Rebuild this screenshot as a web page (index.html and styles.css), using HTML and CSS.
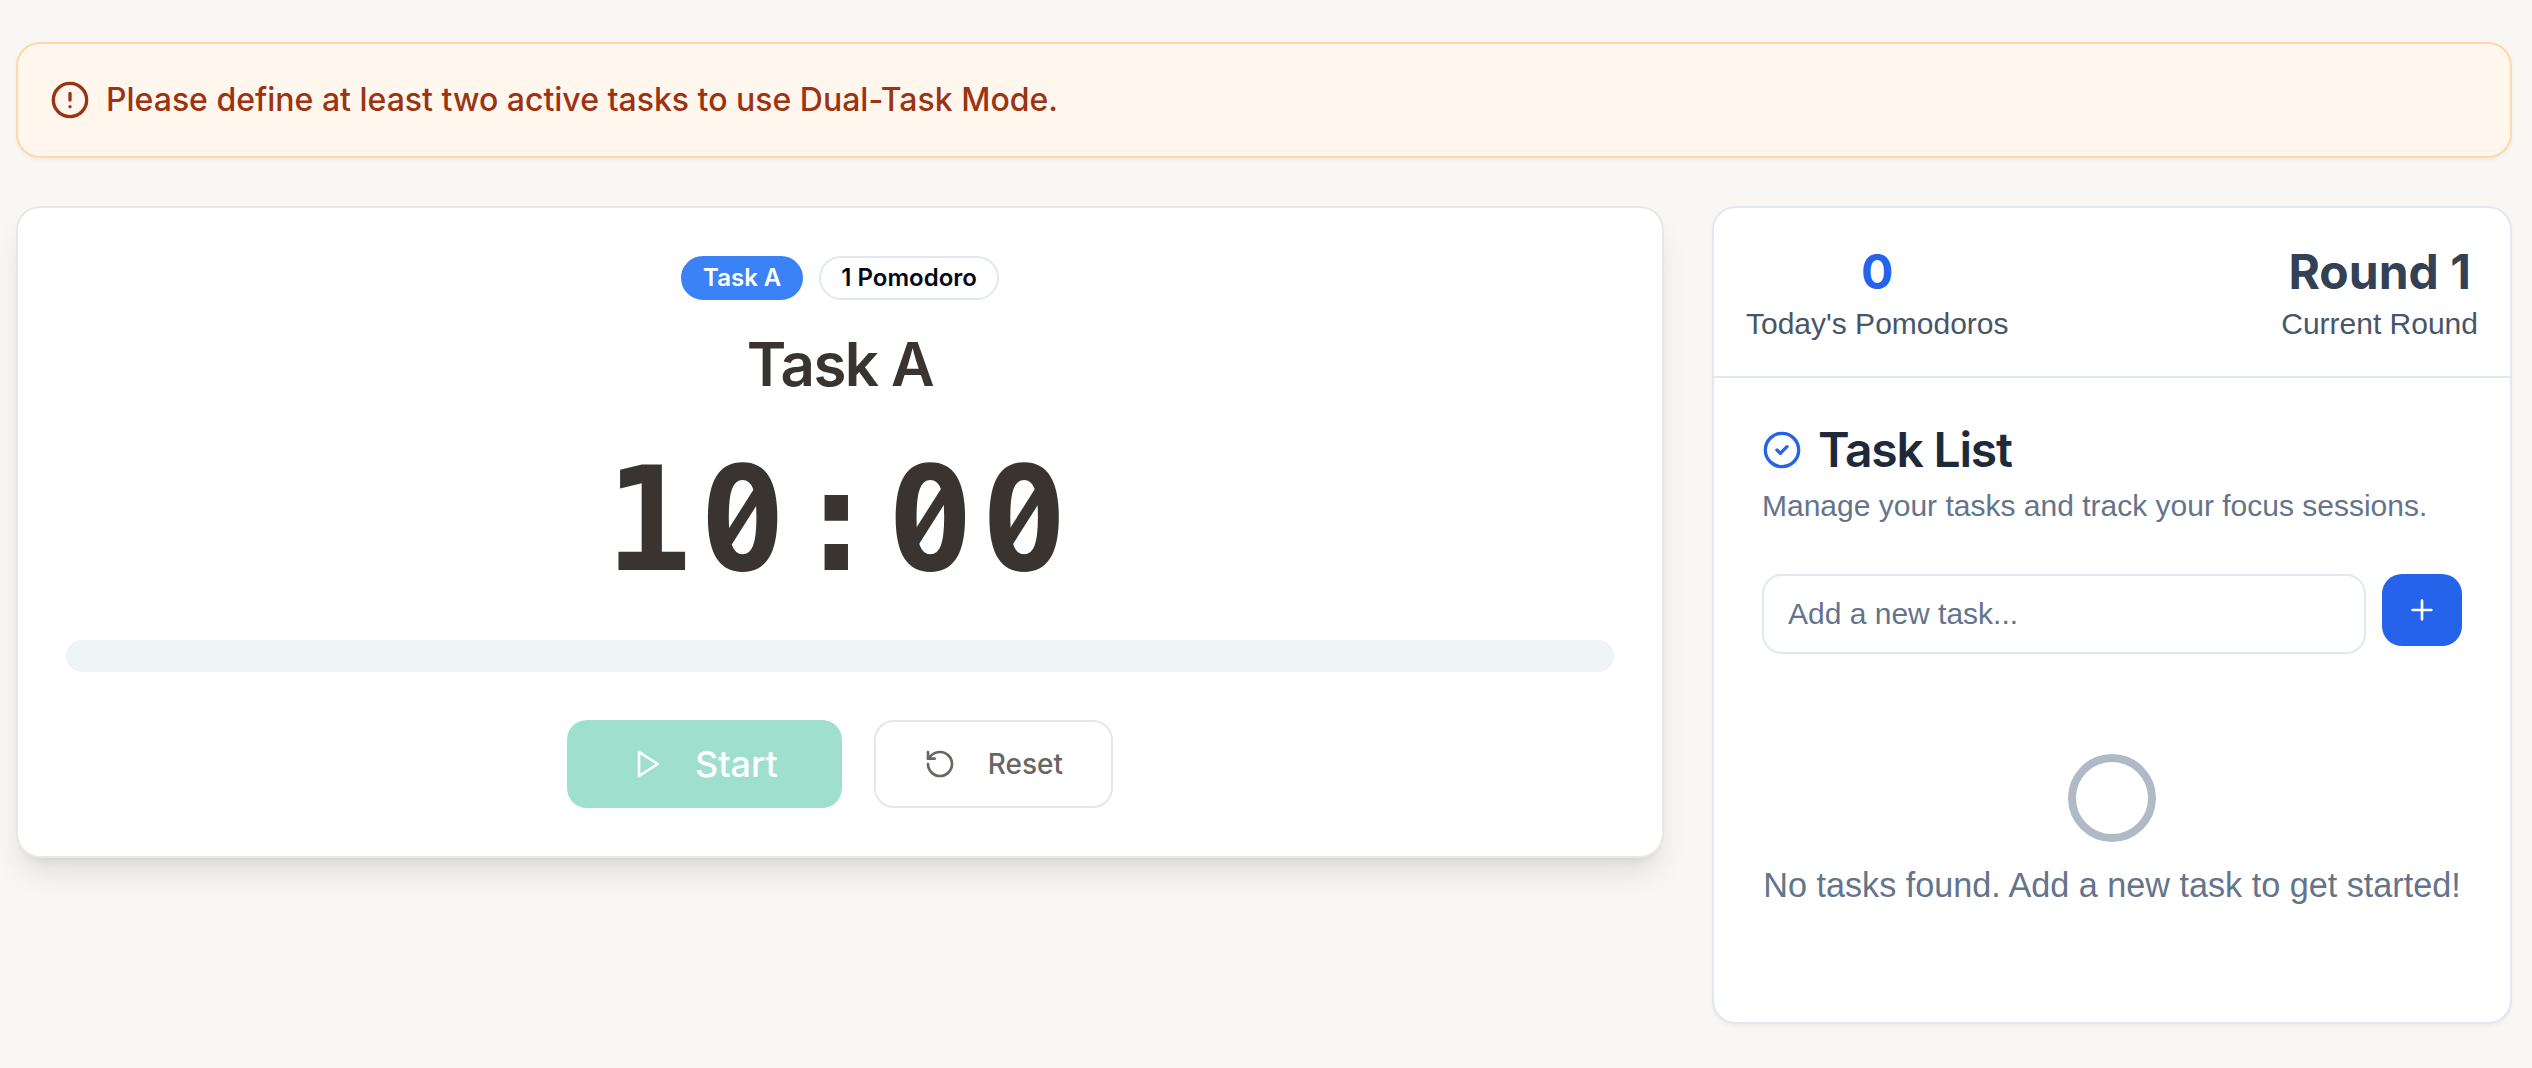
FILE: index.html
```html
<!DOCTYPE html>
<html lang="en">
<head>
<meta charset="utf-8">
<title>Dual-Task Pomodoro</title>
<link rel="stylesheet" href="styles.css">
</head>
<body>
<main class="page">
  <div class="alert" role="alert">
    <svg class="icon icon-lg" viewBox="0 0 24 24"><circle cx="12" cy="12" r="10"/><path d="M12 8v4M12 16h.01"/></svg>
    <span class="alert-text">Please define at least two active tasks to use Dual-Task Mode.</span>
  </div>
  <div class="columns">
    <section class="card timer-card">
      <div class="badges">
        <span class="badge badge-active">Task A</span>
        <span class="badge">1 Pomodoro</span>
      </div>
      <h1 class="task-name">Task A</h1>
      <div class="clock"><span>1</span><span class="zero">0</span><span>:</span><span class="zero">0</span><span class="zero">0</span></div>
      <div class="progress"></div>
      <div class="actions">
        <button class="btn btn-start" disabled>
          <svg class="icon" viewBox="0 0 24 24"><path d="M6 3l14 9-14 9z"/></svg>Start
        </button>
        <button class="btn btn-reset">
          <svg class="icon" viewBox="0 0 24 24"><path d="M3 12a9 9 0 1 0 9-9 9.75 9.75 0 0 0-6.74 2.74L3 8"/><path d="M3 3v5h5"/></svg>Reset
        </button>
      </div>
    </section>
    <aside class="card side-card">
      <div class="stats">
        <div class="stat">
          <span class="stat-value stat-blue">0</span>
          <span class="stat-label">Today's Pomodoros</span>
        </div>
        <div class="stat">
          <span class="stat-value">Round 1</span>
          <span class="stat-label">Current Round</span>
        </div>
      </div>
      <div class="tasks">
        <h2 class="tasks-title">
          <svg class="icon icon-lg icon-blue" viewBox="0 0 24 24"><circle cx="12" cy="12" r="10"/><path d="m9 12 2 2 4-4"/></svg>
          <span>Task List</span>
        </h2>
        <p class="tasks-desc">Manage your tasks and track your focus sessions.</p>
        <form class="add-row">
          <input class="add-input" type="text" placeholder="Add a new task...">
          <button class="add-btn" type="button" aria-label="Add task">
            <svg class="icon" viewBox="0 0 24 24"><path d="M5 12h14M12 5v14"/></svg>
          </button>
        </form>
        <div class="empty">
          <div class="empty-ring"></div>
          <p class="empty-text">No tasks found. Add a new task to get started!</p>
        </div>
      </div>
    </aside>
  </div>
</main>
</body>
</html>
```
FILE: styles.css
```css
* { box-sizing: border-box; margin: 0; padding: 0; }

body {
  min-height: 100vh;
  background: #f8f7f3;
  font-family: "Liberation Sans", Arial, sans-serif;
}

.page {
  display: flex;
  flex-direction: column;
  gap: 48px;
  padding: 42px 20px 0 16px;
}

.icon {
  width: 32px;
  height: 32px;
  flex: none;
  fill: none;
  stroke: currentColor;
  stroke-width: 2;
  stroke-linecap: round;
  stroke-linejoin: round;
}
.icon-lg { width: 40px; height: 40px; }
.icon-blue { color: #2563eb; }

.alert {
  display: flex;
  align-items: center;
  gap: 16px;
  height: 116px;
  padding: 0 32px;
  border: 2px solid #fed7aa;
  border-radius: 24px;
  background: #fff6ed;
  color: #9a3412;
  box-shadow: 0 2px 4px rgba(0, 0, 0, 0.05);
}
.alert-text { font: 500 32px/48px Inter, sans-serif; }

.columns {
  display: grid;
  grid-template-columns: 1648px 800px;
  gap: 48px;
  align-items: start;
}

.card { border-radius: 24px; background: #fff; }

.timer-card {
  display: flex;
  flex-direction: column;
  align-items: center;
  height: 652px;
  padding: 48px;
  border: 2px solid #e8e8e3;
  box-shadow: 0 20px 30px -6px rgba(0, 0, 0, 0.1), 0 8px 12px -8px rgba(0, 0, 0, 0.1);
}

.badges { display: flex; gap: 16px; }
.badge {
  height: 44px;
  padding: 0 20px;
  border: 2px solid #e2e8f0;
  border-radius: 22px;
  font: 600 24px/40px Inter, sans-serif;
  color: #020817;
}
.badge-active { border-color: #3b82f6; background: #3b82f6; color: #fff; }

.task-name {
  margin-top: 28px;
  font: 600 60px/72px Inter, sans-serif;
  letter-spacing: -0.025em;
  color: #3a3431;
}

.clock {
  display: flex;
  margin-top: 48px;
  font: bold 144px/144px "DejaVu Sans Mono", monospace;
  letter-spacing: 0.05em;
  color: #3a3431;
}

/* Slashed zero: hide the dot of the digit, then lay a slanted bar across it */
.zero { position: relative; }
.zero::before,
.zero::after {
  content: "";
  position: absolute;
  left: 43.5px;
  top: 68.3px;
  transform: translate(-50%, -50%);
}
.zero::before { width: 22px; height: 30px; background: #fff; }
.zero::after {
  width: 10.5px;
  height: 66px;
  background: currentColor;
  transform: translate(-50%, -50%) rotate(32.4deg);
}

.progress {
  width: 100%;
  height: 32px;
  margin: 48px 0;
  border-radius: 16px;
  background: #eff4f7;
}

.actions { display: flex; gap: 32px; }
.btn {
  display: flex;
  align-items: center;
  gap: 32px;
  height: 88px;
  border: 0;
  border-radius: 20px;
  font: 500 28px/40px Inter, sans-serif;
}
.btn-start { padding: 0 64px; background: #9fdfcd; color: #fff; font-size: 36px; }
.btn-reset { padding: 0 48px; border: 2px solid #e8e8e3; background: #fff; color: #6b6662; }

.side-card {
  height: 818px;
  border: 2px solid #e2e8f0;
  box-shadow: 0 2px 4px rgba(0, 0, 0, 0.05);
}

.stats {
  display: flex;
  justify-content: space-between;
  height: 170px;
  padding: 32px;
  border-bottom: 2px solid #e2e8f0;
}
.stat { display: flex; flex-direction: column; align-items: center; }
.stat-value { font: 700 48px/64px Inter, sans-serif; color: #334155; }
.stat-blue { color: #2563eb; }
.stat-label { font-size: 30px; line-height: 40px; color: #475569; }

.tasks { padding: 48px; }
.tasks-title {
  display: flex;
  align-items: center;
  gap: 16px;
  font: 600 48px/48px Inter, sans-serif;
  letter-spacing: -0.025em;
  color: #1e293b;
}
.tasks-desc { margin-top: 12px; font-size: 30px; line-height: 40px; color: #64748b; }

.add-row { display: flex; align-items: flex-start; gap: 16px; margin-top: 48px; }
.add-input {
  flex: 1;
  min-width: 0;
  height: 80px;
  padding: 0 24px;
  border: 2px solid #e2e8f0;
  border-radius: 20px;
  background: #fff;
  font: 30px "Liberation Sans", Arial, sans-serif;
}
.add-input::placeholder { color: #64748b; opacity: 1; }
.add-btn {
  display: flex;
  align-items: center;
  justify-content: center;
  width: 80px;
  height: 72px;
  border: 0;
  border-radius: 20px;
  background: #2563eb;
  color: #fff;
}

.empty {
  display: flex;
  flex-direction: column;
  align-items: center;
  margin-top: 100px;
}
.empty-ring { width: 88px; height: 88px; border: 8px solid #b2b9c6; border-radius: 50%; }
.empty-text {
  margin-top: 19px;
  font-size: 34.2px;
  line-height: 48px;
  white-space: nowrap;
  color: #64748b;
}
```
